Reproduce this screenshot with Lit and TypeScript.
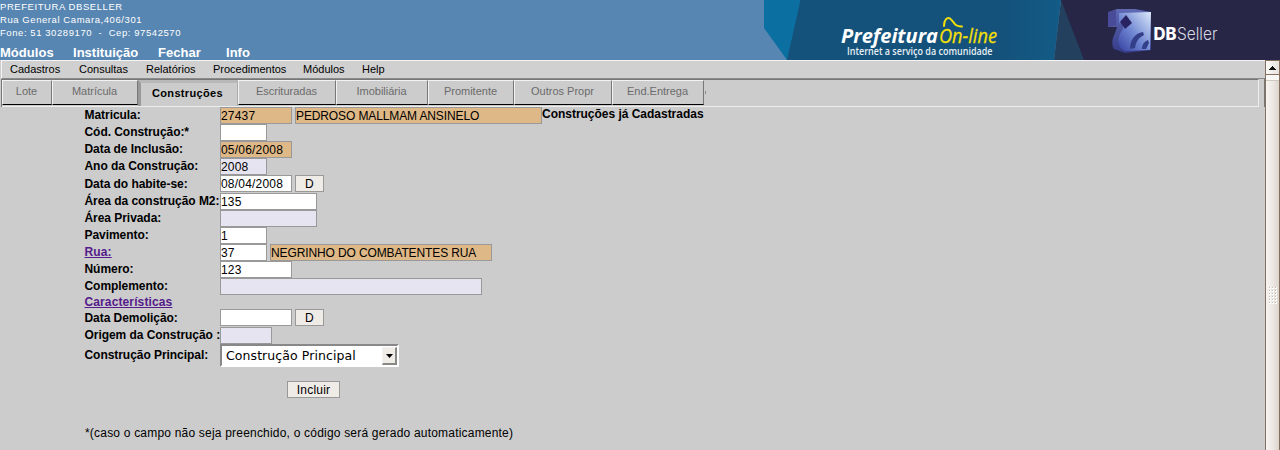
import { LitElement, html, svg, css } from "lit";
import { customElement } from "lit/decorators.js";
import { classMap } from "lit/directives/class-map.js";
import { styleMap } from "lit/directives/style-map.js";

type Field = { w: number; tone?: "locked" | "optional"; value?: string; tight?: boolean };
type Row = { label: string; h: number; link?: boolean; fields?: Field[]; date?: boolean; select?: string; drop?: number };

const MODULES = [["Módulos", 73], ["Instituição", 85], ["Fechar", 68], ["Info", 40]] as const;
const MENU = [["Cadastros", 69], ["Consultas", 67], ["Relatórios", 67], ["Procedimentos", 90], ["Módulos", 59], ["Help", 40]] as const;
const TABS = [["Lote", 50], ["Matrícula", 86], ["Construções", 100], ["Escrituradas", 98], ["Imobiliária", 92], ["Promitente", 86], ["Outros Propr", 98], ["End.Entrega", 92]] as const;
const ROWS: Row[] = [
  { label: "Matricula:", h: 17, drop: 1, fields: [{ w: 72, tone: "locked", value: "27437" }, { w: 247, tone: "locked", value: "PEDROSO MALLMAM ANSINELO", tight: true }] },
  { label: "Cód. Construção:*", h: 17, drop: 1, fields: [{ w: 47 }] },
  { label: "Data de Inclusão:", h: 17, drop: 1, fields: [{ w: 72, tone: "locked", value: "05/06/2008" }] },
  { label: "Ano da Construção:", h: 17, drop: 1, fields: [{ w: 47, tone: "optional", value: "2008" }] },
  { label: "Data do habite-se:", h: 18, drop: 2, fields: [{ w: 72, value: "08/04/2008" }], date: true },
  { label: "Área da construção M2:", h: 17, drop: 1, fields: [{ w: 97, value: "135" }] },
  { label: "Área Privada:", h: 17, drop: 1, fields: [{ w: 97, tone: "optional" }] },
  { label: "Pavimento:", h: 17, drop: 1, fields: [{ w: 47, value: "1" }] },
  { label: "Rua:", h: 17, link: true, drop: 1, fields: [{ w: 47, value: "37" }, { w: 222, tone: "locked", value: "NEGRINHO DO COMBATENTES RUA", tight: true }] },
  { label: "Número:", h: 17, drop: 1, fields: [{ w: 72, value: "123" }] },
  { label: "Complemento:", h: 17, drop: 1, fields: [{ w: 262, tone: "optional" }] },
  { label: "Características", h: 14, link: true },
  { label: "Data Demolição:", h: 18, drop: 2, fields: [{ w: 72 }], date: true },
  { label: "Origem da Construção :", h: 17, drop: 1, fields: [{ w: 52, tone: "optional" }] },
  { label: "Construção Principal:", h: 23, drop: 4, select: "Construção Principal" },
];

@customElement("app-banner")
class AppBanner extends LitElement {
  static styles = css`
    :host { display: flex; justify-content: space-between; height: 60px; background: #5786b2; color: #fff; font-family: "Liberation Sans", Arial, sans-serif; overflow: hidden; }
    .address { font-size: 9.5px; line-height: 13px; letter-spacing: 0.57px; white-space: pre; height: 46px; }
    .modules { display: flex; font-size: 13px; line-height: 14px; font-weight: bold; letter-spacing: 0.03px; }
    svg { display: block; flex: none; }
  `;
  render() {
    return html`
      <div class="left">
        <div class="address">PREFEITURA DBSELLER
Rua General Camara,406/301
Fone: 51 30289170  -  Cep: 97542570</div>
        <div class="modules">${MODULES.map(([m, w]) => html`<span style=${styleMap({ width: `${w}px` })}>${m}</span>`)}</div>
      </div>
      <svg width="516" height="60" viewBox="0 0 516 60">
        <defs>
          <linearGradient id="face" x1="0" y1="1" x2="1" y2="0">
            <stop offset="0" stop-color="#3540a0"/><stop offset=".45" stop-color="#6f86d2"/><stop offset="1" stop-color="#dce9fa"/>
          </linearGradient>
          <linearGradient id="side" x1="0" y1="0" x2="0" y2="1">
            <stop offset="0" stop-color="#5f69b4"/><stop offset="1" stop-color="#353b88"/>
          </linearGradient>
          <linearGradient id="sea" x1="0" x2="1"><stop offset=".8" stop-color="#14527b"/><stop offset="1" stop-color="#125c87"/></linearGradient>
        </defs>
        ${svg`
          <path d="M0 0H40V60H23L0 28Z" fill="#0b6fa1"/>
          <path d="M36.500 0H297L290 60H23Z" fill="url(#sea)"/>
          <path d="M297 0H320V60H290Z" fill="#23405f"/>
          <path d="M297 0H516V60H320Z" fill="#272647"/>
          <g font-family="Open Sans, sans-serif" font-style="italic">
            <text x="77" y="43" font-size="19.500" font-weight="bold" fill="#fff" textLength="97" lengthAdjust="spacingAndGlyphs">Prefeitura</text>
            <text x="175" y="43" font-size="20" fill="#f2df0a" stroke="#f2df0a" stroke-width=".3" textLength="58" lengthAdjust="spacingAndGlyphs">On-line</text>
          </g>
          <path d="M180 26C180 20 183 17 186 18.500C190 21 190 27 198 26.500" fill="none" stroke="#f2df0a" stroke-width="2" stroke-linecap="round"/>
          <text x="83" y="54.500" font-family="Open Sans, sans-serif" font-size="10" font-weight="600" fill="#e6eff5" textLength="145.500" lengthAdjust="spacingAndGlyphs">Internet a serviço da comunidade</text>
          <path d="M345 12L353 9H371L387 12L387 50L361 53L350 49Q346 43 351 33L353 27L344 27Z" fill="url(#side)"/>
          <path d="M355 13L387 12L386 50L361 51Q354 48 354 40Q355 34 359 29V24L355 23Z" fill="url(#face)"/>
          <path d="M344 12L352 10V25L344 27Z" fill="#4a4b98"/>
          <path d="M362 15L368 23L361 29L356 22Z" fill="#292361"/>
          <path d="M366 49C366 40 371 33 379 32L380 35C374 38 372 42 371 48ZM378 49C378 44 381 41 384 40L385 43L382 49Z" fill="#333f88"/>
          <text x="389.500" y="39.500" font-family="Inter, sans-serif" font-size="17" font-weight="800" fill="#fff" textLength="23" lengthAdjust="spacingAndGlyphs">DB</text>
          <text x="413" y="39.500" font-family="Inter, sans-serif" font-size="17" font-weight="300" fill="#d7d7e2" textLength="40.500" lengthAdjust="spacingAndGlyphs">Seller</text>
        `}
      </svg>`;
  }
}

@customElement("app-scrollbar")
class AppScrollbar extends LitElement {
  static styles = css`
    :host { display: flex; flex-direction: column; box-sizing: border-box; width: 15px; border: solid #85705f; border-width: 1px 1px 0; background: #f6f3f0; }
    .up { height: 13px; display: grid; place-items: center; background: linear-gradient(90deg, #fbfaf8, #e7e2dc); border-bottom: 1px solid #85705f; }
    .gap { height: 5px; background: #faf8f5; border-bottom: 1px solid #cec7be; }
    .thumb { flex: 1; background: linear-gradient(90deg, #f7f4f2, #eeeae6 45%, #dcd5cc); }
    .thumb svg { display: block; margin: 206px 0 0 3px; }
  `;
  render() {
    return html`
      <div class="up"><svg width="7" height="4" viewBox="0 0 7 4" shape-rendering="crispEdges"><path d="M3 0h1v1h1v1h1v1h1v1H0V3h1V2h1V1h1z" fill="#111"/></svg></div>
      <div class="gap"></div>
      <div class="thumb"><svg width="8" height="17" shape-rendering="crispEdges">
        ${[0, 3, 6, 9, 12, 15].map((y) => [0, 3, 6].map((x) => svg`<path d=${`M${x} ${y}h2v2h-2z`} fill="#fff"/><path d=${`M${x} ${y}h1v1h-1z`} fill="#c2bab0"/>`))}
      </svg></div>`;
  }
}

@customElement("app-root")
class AppRoot extends LitElement {
  static styles = css`
    :host { display: flex; flex-direction: column; width: 1280px; height: 450px; overflow: hidden; background: #ccc; color: #000; font: 12px "Liberation Sans", Arial, sans-serif; }
    .body { display: flex; flex: 1; min-height: 0; }
    .content { flex: 1; min-width: 0; }
    .menu { box-sizing: border-box; height: 19px; display: flex; margin-left: 1px; padding-left: 8px; background: #d0d0d0; border-top: 1px solid #f4f4f4; border-left: 1px solid #f4f4f4; border-bottom: 1px solid #8a8a8a; font-size: 11px; line-height: 17px; letter-spacing: 0; }
    .menu span { flex: none; }
    .strip { box-sizing: border-box; height: 28px; margin-left: 1px; padding-right: 5px; border-right: 1px solid #777; border-left: 1px solid #777; display: flex; }
    .tabs { box-sizing: border-box; flex: 1; display: flex; border-top: 1px solid #777; border-right: 1px solid #eee; border-bottom: 1px solid #eee; }
    .tab { box-sizing: border-box; height: 25px; border: 1px solid; border-color: #f2f2f2 #777 #000 #f2f2f2; padding-right: 1px; color: #6b6b6b; font-size: 11px; line-height: 21px; text-align: center; }
    .tab.active { height: 26px; border-width: 3px 1px 0 3px; border-color: #b8b8b8 #aaa #ccc #999; padding-right: 3px; color: #000; font-weight: bold; line-height: 21px; letter-spacing: .35px; }
    .dot { width: 1px; height: 3px; background: #888; margin: 11px 0 0 1px; }
    .form { display: flex; }
    .rows { margin-left: 84.5px; }
    .row { display: flex; align-items: flex-start; }
    .label { width: 135.5px; flex: none; font-weight: bold; line-height: 14px; letter-spacing: -.05px; white-space: nowrap; }
    .link { color: #551a8b; text-decoration: underline; letter-spacing: .12px; }
    .fields { display: flex; gap: 3px; }
    input, button { box-sizing: border-box; height: 17px; border: 1px solid #999; border-radius: 0; margin: 0; padding: 0; font: 12px "Liberation Sans", Arial, sans-serif; letter-spacing: .2px; outline: none; color: #000; background: #fff; }
    input.locked { background: #deb887; }
    input.optional { background: #e6e4f1; }
    input.tight { letter-spacing: -.12px; }
    button { background: #efebe7; }
    .day { width: 29px; }
    .select { box-sizing: border-box; width: 179px; height: 23px; display: flex; justify-content: space-between; background: #fff; border: 2px solid; border-color: #888 #fff #fff #888; font: 12.5px "DejaVu Sans", sans-serif; line-height: 19px; letter-spacing: .08px; padding-left: 4px; }
    .arrow { box-sizing: border-box; width: 15px; height: 18px; margin-top: 1px; background: #efebe7; border: 1px solid; border-color: #f4f2f0 #888 #888 #f4f2f0; border-right-width: 2px; border-bottom-width: 2px; display: grid; place-items: center; }
    .arrow svg { display: block; }
    .existing { font-weight: bold; line-height: 14px; letter-spacing: -.02px; }
    .submit { display: block; width: 53px; margin: 14px 0 0 287px; }
    .note { margin: 28px 0 0 85px; line-height: 14px; letter-spacing: .2px; }
  `;
  private field(f: Field) {
    return html`<input class=${classMap({ locked: f.tone === "locked", optional: f.tone === "optional", tight: !!f.tight })} style=${styleMap({ width: `${f.w}px` })} .value=${f.value ?? ""} />`;
  }
  private row(r: Row) {
    return html`<div class="row" style=${styleMap({ height: `${r.h}px` })}>
      <div class="label" style=${styleMap({ paddingTop: `${r.drop ?? 0}px` })}><span class=${classMap({ link: !!r.link })}>${r.label}</span></div>
      <div class="fields">
        ${(r.fields ?? []).map((f) => this.field(f))}
        ${r.date ? html`<button class="day">D</button>` : ""}
        ${r.select ? html`<div class="select"><span>${r.select}</span><span class="arrow"><svg width="7" height="4" viewBox="0 0 7 4"><path d="M0 0H7L3.500 4Z"/></svg></span></div>` : ""}
      </div>
    </div>`;
  }
  render() {
    return html`
      <app-banner></app-banner>
      <div class="body">
        <div class="content">
          <div class="menu">${MENU.map(([m, w]) => html`<span style=${styleMap({ width: `${w}px` })}>${m}</span>`)}</div>
          <div class="strip"><div class="tabs">
            ${TABS.map(([t, w]) => html`<div class=${classMap({ tab: true, active: t === "Construções" })} style=${styleMap({ width: `${w}px` })}>${t}</div>`)}
            <div class="dot"></div>
          </div></div>
          <div class="form">
            <div class="rows">${ROWS.map((r) => this.row(r))}</div>
            <div class="existing">Construções já Cadastradas</div>
          </div>
          <button class="submit">Incluir</button>
          <div class="note">*(caso o campo não seja preenchido, o código será gerado automaticamente)</div>
        </div>
        <app-scrollbar></app-scrollbar>
      </div>`;
  }
}
